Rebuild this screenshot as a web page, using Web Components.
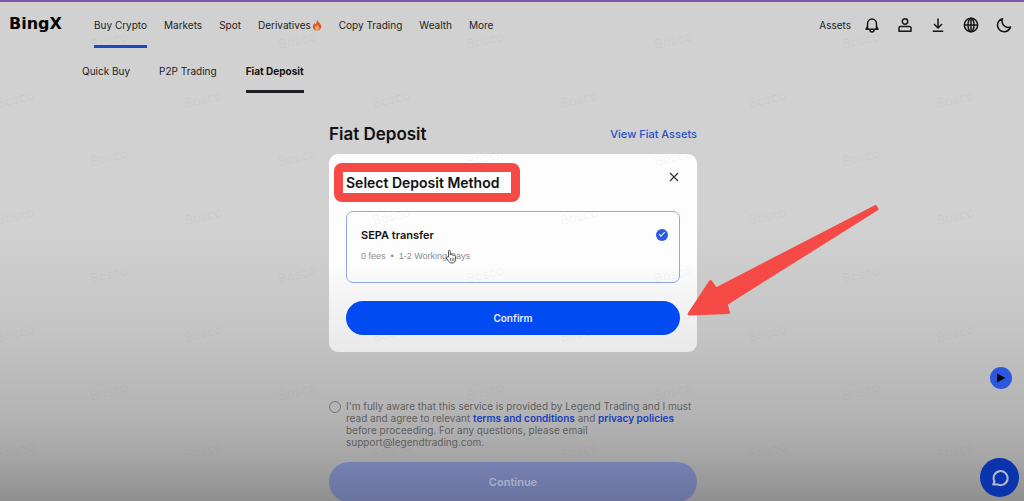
<!DOCTYPE html>
<html lang="en">
<head>
<meta charset="utf-8">
<title>Fiat Deposit</title>
<style>
    html, body { margin: 0; height: 100%; }
    body { overflow: hidden; font-family: Inter, "Liberation Sans", sans-serif; }
</style>
</head>
<body>
<deposit-page></deposit-page>

<script>
class NavLink extends HTMLElement {
    constructor() {
        super();
        this.attachShadow({ mode: 'open' });
    }

    connectedCallback() {
        /* html */
        this.shadowRoot.innerHTML = `
            <style>
                :host { display: block; }
                a {
                    display: flex;
                    align-items: center;
                    box-sizing: border-box;
                    height: 100%;
                    border-bottom: 3px solid transparent;
                    padding-top: 3px;
                    color: #1c1d20;
                    font-size: 10px;
                    font-weight: 400;
                    line-height: 14px;
                    text-decoration: none;
                    white-space: nowrap;
                }
                :host([active="main"]) a { border-color: #1c48c6; }
                :host([active="sub"]) a { border-color: #1c1e22; color: #111; font-weight: 700; }
            </style>
            <a href="#"><slot></slot></a>
        `;
    }
}

class IconButton extends HTMLElement {
    static icons = {
        bell: '<path d="M1.500 12.300h13M3.500 12V7a4.500 5 0 0 1 9 0v5M3.500 9.500l-1.500 2.800M12.500 9.500l1.500 2.800M6 13a2 2 0 0 0 4 0"/>',
        user: '<circle cx="8" cy="4.500" r="2.700"/><path d="M2 14.300v-3.300a1.500 1.500 0 0 1 1.500-1.500h9a1.500 1.500 0 0 1 1.500 1.500v3.300z"/>',
        download: '<path d="M8 1.500v9M4 7l4 4 4-4M2.800 14.300h10.400"/>',
        globe: '<circle cx="8" cy="8" r="6.700"/><ellipse cx="8" cy="8" rx="3" ry="6.700"/><path d="M1.300 8h13.400M8 1.300v13.400"/>',
        moon: '<path d="M6.500 1.800a6.600 6.600 0 1 0 8 8.200A6.300 6.300 0 0 1 6.500 1.800z"/>'
    };

    constructor() {
        super();
        this.attachShadow({ mode: 'open' });
    }

    connectedCallback() {
        const icon = this.getAttribute('icon');
        /* html */
        this.shadowRoot.innerHTML = `
            <style>
                :host { display: block; }
                button { display: block; padding: 0; border: none; background: none; cursor: pointer; }
                svg { display: block; fill: none; stroke: #151515; stroke-width: 1.5; stroke-linejoin: round; }
            </style>
            <button aria-label="${icon}">
                <svg width="16" height="16" viewBox="0 0 16 16">${IconButton.icons[icon]}</svg>
            </button>
        `;
    }
}

class SiteHeader extends HTMLElement {
    constructor() {
        super();
        this.attachShadow({ mode: 'open' });
    }

    connectedCallback() {
        /* html */
        this.shadowRoot.innerHTML = `
            <style>
                :host { display: block; border-top: 2px solid #8058a8; }
                header { display: flex; height: 46px; padding: 0 12px 0 9px; }
                .logo {
                    width: 85px;
                    line-height: 44px;
                    font-family: "DejaVu Sans", sans-serif;
                    font-size: 16px;
                    font-weight: 700;
                    color: #050505;
                    text-decoration: none;
                }
                nav { display: flex; gap: 17px; }
                .tools { display: flex; align-items: center; gap: 17px; margin-left: auto; }
                .tools nav-link { height: 46px; margin-right: -4px; }
                .sub { height: 45px; padding-left: 82px; gap: 29px; }
                svg { display: block; margin-left: 1px; }
            </style>
            <header>
                <a class="logo" href="#">BingX</a>
                <nav>
                    <nav-link active="main">Buy Crypto</nav-link>
                    <nav-link>Markets</nav-link>
                    <nav-link>Spot</nav-link>
                    <nav-link>Derivatives<svg width="10" height="12" viewBox="1 0 10 12">
                        <path d="M6 .5c.4 2 3 3.300 4 5.800.9 2.600-.8 5.200-4 5.200S1.200 9 2 6.500c.3-1 .9-1.500 1.300-2.500.5.4.8.9.9 1.500C5.500 4.200 6 2.500 6 .5z" fill="#e0562c"/>
                        <path d="M6.300 5.200c.3 1.500 2 2 2 3.900 0 1.200-1 2-2.300 2s-2.300-.8-2.200-2c.1-1 .8-1.400 1-2.200.4.200.6.500.7.900.5-.7.800-1.500.8-2.600z" fill="#f0ae5c"/>
                    </svg></nav-link>
                    <nav-link>Copy Trading</nav-link>
                    <nav-link>Wealth</nav-link>
                    <nav-link>More</nav-link>
                </nav>
                <div class="tools">
                    <nav-link>Assets</nav-link>
                    <icon-button icon="bell"></icon-button>
                    <icon-button icon="user"></icon-button>
                    <icon-button icon="download"></icon-button>
                    <icon-button icon="globe"></icon-button>
                    <icon-button icon="moon"></icon-button>
                </div>
            </header>
            <nav class="sub">
                <nav-link>Quick Buy</nav-link>
                <nav-link>P2P Trading</nav-link>
                <nav-link active="sub">Fiat Deposit</nav-link>
            </nav>
        `;
    }
}

class DepositDialog extends HTMLElement {
    constructor() {
        super();
        this.attachShadow({ mode: 'open' });
    }

    connectedCallback() {
        /* html */
        this.shadowRoot.innerHTML = `
            <style>
                :host {
                    display: block;
                    padding: 9px 17px 17px;
                    border-radius: 9px;
                    background: linear-gradient(#fdfdfd 55%, #f5f5f5 70%, #e9e9e9);
                }
                .top { display: flex; justify-content: space-between; align-items: flex-start; }
                h2 {
                    margin: 0 0 0 -12px;
                    padding: 0 12px 0 3px;
                    border: 9px solid #f54a45;
                    border-radius: 8px;
                    font-size: 14px;
                    line-height: 21px;
                    font-weight: 600;
                    color: #101010;
                }
                .close { margin-top: 8px; padding: 0; border: none; background: none; cursor: pointer; }
                svg { display: block; }
                label {
                    position: relative;
                    display: flex;
                    justify-content: space-between;
                    align-items: flex-start;
                    margin: 9px 0 18px;
                    padding: 15px 11px 19px 14px;
                    border: 1px solid #94a6e4;
                    border-radius: 7px;
                }
                strong { display: block; font-size: 11px; line-height: 16px; font-weight: 600; color: #111; }
                small {
                    display: block;
                    margin-top: 6px;
                    font-family: "Liberation Sans", sans-serif;
                    font-size: 9px;
                    line-height: 14px;
                    color: #8c8c8c;
                    white-space: pre;
                }
                input {
                    appearance: none;
                    width: 12px;
                    height: 12px;
                    margin: 2px 0 0;
                    border-radius: 50%;
                    background: #2b5be6;
                }
                input::before {
                    content: "";
                    display: block;
                    width: 5px;
                    height: 2px;
                    margin: 3px 0 0 3px;
                    border: solid #fff;
                    border-width: 0 0 1px 1px;
                    transform: rotate(-45deg);
                }
                .hand { position: absolute; left: 98px; top: 37px; }
                .confirm {
                    display: block;
                    width: 100%;
                    height: 34px;
                    border: none;
                    border-radius: 17px;
                    background: #024bf3;
                    color: #e8edfb;
                    font: 600 10px Inter, "Liberation Sans", sans-serif;
                    cursor: pointer;
                }
            </style>
            <div class="top">
                <h2>Select Deposit Method</h2>
                <button class="close" aria-label="Close">
                    <svg width="12" height="12" viewBox="0 0 12 12"><path d="M2 2l8 8M10 2l-8 8" stroke="#333" stroke-width="1.200"/></svg>
                </button>
            </div>
            <label>
                <span>
                    <strong>SEPA transfer</strong>
                    <small>0 fees  •  1-2 Working Days</small>
                </span>
                <input type="radio" name="method" checked>
                <svg class="hand" width="13" height="15" viewBox="0 0 13 15">
                    <path d="M3.500 8V2.200c0-1.300 1.800-1.300 1.800 0V6c.3-.8 1.700-.7 1.800.2.500-.6 1.600-.4 1.700.4.600-.5 1.700-.2 1.700.8v3c0 2-1 3.600-3.500 3.600-2 0-3-.8-4-2.500L1.200 9c-.4-1 .7-1.600 1.400-.9z" fill="#f4f4f4" stroke="#555"/>
                    <path d="M5.500 9v3M7.200 9v3M8.900 9v3" stroke="#555" stroke-width=".7"/>
                </svg>
            </label>
            <button class="confirm">Confirm</button>
        `;
    }
}

class TermsCheck extends HTMLElement {
    constructor() {
        super();
        this.attachShadow({ mode: 'open' });
    }

    connectedCallback() {
        /* html */
        this.shadowRoot.innerHTML = `
            <style>
                :host { display: flex; gap: 5px; }
                input {
                    appearance: none;
                    flex: none;
                    box-sizing: border-box;
                    width: 12px;
                    height: 12px;
                    margin: 1px 0 0;
                    border: 1px solid #777;
                    border-radius: 50%;
                }
                label { font-size: 10px; line-height: 12px; color: #5f5f5f; }
                a { color: #1a3fb8; font-weight: 600; text-decoration: none; }
            </style>
            <input type="radio" id="agree">
            <label for="agree">I'm fully aware that this service is provided by Legend Trading and I must
                <br>read and agree to relevant <a href="#">terms and conditions</a> and <a href="#">privacy policies</a>
                <br>before proceeding. For any questions, please email
                <br>support@legendtrading.com.</label>
        `;
    }
}

class PageWatermark extends HTMLElement {
    constructor() {
        super();
        this.attachShadow({ mode: 'open' });
    }

    connectedCallback() {
        const text = this.getAttribute('text');
        const row = (count) => `<div>${`<span>${text}</span>`.repeat(count)}</div>`;
        /* html */
        this.shadowRoot.innerHTML = `
            <style>
                :host {
                    position: absolute;
                    inset: 11px 0 23px;
                    display: grid;
                    grid-auto-rows: 1fr;
                    align-items: center;
                    overflow: hidden;
                    pointer-events: none;
                    font-size: 13px;
                    color: rgba(60, 70, 90, 0.06);
                }
                div { display: flex; margin-left: 15px; }
                div:nth-of-type(even) { margin-left: -79px; }
                span { flex: none; width: 188px; text-align: center; transform: rotate(-13deg); }
            </style>
            ${(row(5) + row(6)).repeat(4)}
        `;
    }
}

class FloatingActions extends HTMLElement {
    constructor() {
        super();
        this.attachShadow({ mode: 'open' });
    }

    connectedCallback() {
        /* html */
        this.shadowRoot.innerHTML = `
            <style>
                :host {
                    position: absolute;
                    right: 5px;
                    bottom: 5px;
                    display: flex;
                    flex-direction: column;
                    align-items: flex-end;
                    gap: 69px;
                }
                button { display: grid; place-items: center; padding: 0; border: none; border-radius: 50%; cursor: pointer; }
                .play { width: 22px; height: 22px; margin-right: 7px; background: #2c58dd; }
                .chat { width: 39px; height: 39px; background: #0934ae; }
            </style>
            <button class="play" aria-label="Play">
                <svg width="10" height="10" viewBox="0 0 10 10"><path d="M1 .5l8.500 4.500L1 9.500z" fill="#05070d"/></svg>
            </button>
            <button class="chat" aria-label="Chat">
                <svg width="18" height="18" viewBox="0 0 18 18" fill="none" stroke="#b4b9c8" stroke-width="2">
                    <path d="M3.500 12.500a7 7 0 1 1 3.300 3H2.200z" stroke-linejoin="round"/>
                </svg>
            </button>
        `;
    }
}

class DepositPage extends HTMLElement {
    constructor() {
        super();
        this.attachShadow({ mode: 'open' });
    }

    connectedCallback() {
        /* html */
        this.shadowRoot.innerHTML = `
            <style>
                :host {
                    position: relative;
                    display: block;
                    min-height: 100vh;
                    overflow: hidden;
                    background: linear-gradient(#d1d1d1 45%, #cbcbcb 55%, #c5c5c5 65%, #bcbcbc 74%, #b2b2b2 84%, #a6a6a6 91%, #8f8f8f);
                }
                main { position: relative; width: 368px; margin: 0 auto; left: 1px; padding-top: 30px; }
                .title { display: flex; justify-content: space-between; align-items: center; margin-bottom: 9px; }
                h1 { margin: 0; font-size: 17px; line-height: 22px; font-weight: 600; color: #101010; }
                .title a { font-size: 11px; line-height: 22px; color: #2950c8; font-weight: 500; text-decoration: none; }
                terms-check { margin: 48px 0 14px; }
                .continue {
                    display: block;
                    width: 100%;
                    height: 40px;
                    border: none;
                    border-radius: 20px;
                    background: linear-gradient(#7581b4, #6a739e);
                    color: #a9afc4;
                    font: 600 11px Inter, "Liberation Sans", sans-serif;
                }
                .arrow { position: absolute; left: 357px; top: 110px; fill: #f54a45; stroke: #f54a45; stroke-width: 3; stroke-linejoin: round; }
            </style>
            <site-header></site-header>
            <main>
                <div class="title">
                    <h1>Fiat Deposit</h1>
                    <a href="#">View Fiat Assets</a>
                </div>
                <deposit-dialog></deposit-dialog>
                <terms-check></terms-check>
                <button class="continue">Continue</button>
                <svg class="arrow" width="196" height="116" viewBox="0 0 196 116">
                    <path d="M3 111L24.500 78.500L30 86L189.500 3.500L191 6L40 101L42.500 109.500z"/>
                </svg>
            </main>
            <floating-actions></floating-actions>
            <page-watermark text="Bosco"></page-watermark>
        `;
    }
}

// Register the components
customElements.define('nav-link', NavLink);
customElements.define('icon-button', IconButton);
customElements.define('site-header', SiteHeader);
customElements.define('deposit-dialog', DepositDialog);
customElements.define('terms-check', TermsCheck);
customElements.define('page-watermark', PageWatermark);
customElements.define('floating-actions', FloatingActions);
customElements.define('deposit-page', DepositPage);
</script>
</body>
</html>
